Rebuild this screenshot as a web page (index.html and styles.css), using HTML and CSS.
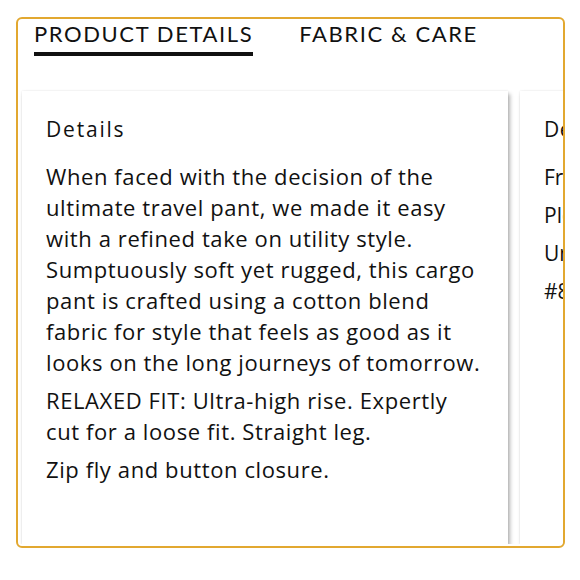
FILE: index.html
```html
<!DOCTYPE html>
<html lang="en">
<head>
<meta charset="utf-8">
<title>Product details</title>
<link rel="stylesheet" href="styles.css">
</head>
<body>
<section class="panel">
  <div class="tablist">
    <button class="tab tab-active">Product Details</button>
    <button class="tab">Fabric &amp; Care</button>
  </div>
  <div class="track">
    <article class="card">
      <h3 class="card-title">Details</h3>
      <p class="card-text">When faced with the decision of the ultimate travel pant, we made it easy with a refined take on utility style. Sumptuously soft yet rugged, this cargo pant is crafted using a cotton blend fabric for style that feels as good as it looks on the long journeys of tomorrow.</p>
      <p class="card-text">RELAXED FIT: Ultra-high rise. Expertly cut for a loose fit. Straight leg.</p>
      <p class="card-text">Zip fly and button closure.</p>
    </article>
    <article class="card card-alt">
      <h3 class="card-title alt-title">Details</h3>
      <ul class="alt-list">
        <li>Front slash pockets</li>
        <li>Pleated cargo pockets</li>
        <li>Unlined</li>
        <li>#8 model</li>
      </ul>
    </article>
  </div>
</section>
</body>
</html>
```
FILE: styles.css
```css
* { box-sizing: border-box; }
body {
  margin: 0;
  background: #fff;
  color: #111;
  font-family: "Open Sans", sans-serif;
}
.panel {
  margin: 17px 15px 0 16px;
  height: 531px;
  border: 2px solid #e2a830;
  border-radius: 6px;
  overflow: hidden;
}
.tablist {
  display: flex;
  gap: 46px;
  padding: 0 0 0 16px;
  height: 70px;
}
.tab {
  background: none;
  border: 0;
  padding: 0 0 3px;
  margin: 0;
  font-family: Lato, sans-serif;
  font-size: 22px;
  letter-spacing: 1.6px;
  text-transform: uppercase;
  color: #111;
  line-height: 30px;
  align-self: flex-start;
  border-bottom: 4px solid transparent;
}
.tab-active { border-bottom-color: #111; }
.track {
  display: flex;
  gap: 12px;
  padding: 2px 0 0 4px;
  overflow: hidden;
}
.card {
  flex: 0 0 486px;
  height: 453px;
  background: #fff;
  padding: 24px 24px;
  box-shadow: 2px 3px 4px rgba(0,0,0,0.3), 0 0 2px rgba(0,0,0,0.1);
}
.card-title {
  margin: 0 0 18px;
  font-family: "Open Sans", sans-serif;
  font-weight: 400;
  font-size: 21px;
  letter-spacing: 1.8px;
  line-height: 28px;
}
.card-text {
  margin: 0 0 7px;
  font-family: "Open Sans", sans-serif;
  font-size: 22px;
  letter-spacing: 0.6px;
  line-height: 31px;
}
.alt-title { letter-spacing: 0.5px; }
.alt-list {
  list-style: none;
  margin: -3px 0 0;
  padding: 0;
  font-family: "Open Sans", sans-serif;
  font-size: 21px;
  line-height: 38px;
}
```
